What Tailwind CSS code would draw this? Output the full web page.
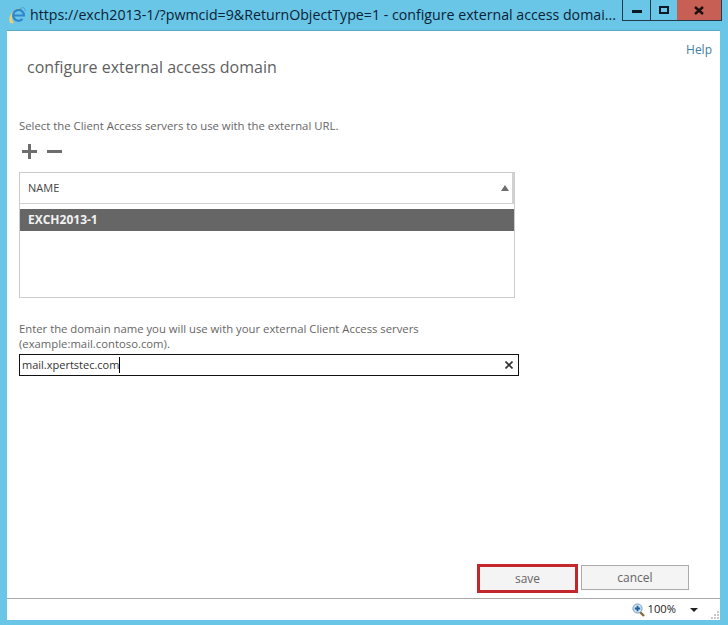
<!DOCTYPE html>
<html lang="en">
	<head>
		<meta charset="UTF-8" />
		<title>configure external access domain</title>
		<script src="https://cdn.jsdelivr.net/npm/@tailwindcss/browser@4"></script>
	</head>
	<body class="m-0 bg-[#69c6e6] font-['Open_Sans',sans-serif]">
		<div class="w-[728px] h-[625px] overflow-hidden flex flex-col">
			<!-- Title bar -->
			<div class="h-[30px] shrink-0 flex items-start pl-[9px] pr-[6px]">
				<svg width="17" height="17" viewBox="0 0 17 17" class="mt-[7px] shrink-0">
					<path d="M1 16 C-1.5 10 3 2.5 12 0.5 C7 3 4.5 6 3.5 10 C3 12 3.5 14.5 5 15.5 C3.5 16.5 2 16.5 1 16 Z" fill="#e8cf78" />
					<path d="M13.5 12 a5.4 5.4 0 1 1 1.4 -3.5 H5" fill="none" stroke="#2f86cc" stroke-width="2.2" />
					<path d="M11 1.5 C14 0 16.5 0.5 16 4" fill="none" stroke="#4f9fd4" stroke-width="1" />
				</svg>
				<div class="ml-[4px] mt-[5px] w-[590px] shrink-0 text-[14.2px] leading-[20px] text-[#0c2236] whitespace-nowrap">https://exch2013-1/?pwmcid=9&amp;ReturnObjectType=1 - configure external access domai...</div>
				<div class="ml-auto h-[21px] flex shrink-0 border-x border-b border-[#1e3a4c]">
					<div class="w-[28px] flex items-center justify-center border-r border-[#1e3a4c]"><div class="w-[10px] h-[3px] mt-[3px] bg-[#0a1a26]"></div></div>
					<div class="w-[26px] flex items-center justify-center"><div class="w-[10px] h-[8px] border-2 border-[#0a1a26]"></div></div>
					<div class="w-[44px] flex items-center justify-center bg-[#c75f55]">
						<svg width="10" height="9" viewBox="0 0 10 9"><path d="M1 1 L9 8 M9 1 L1 8" stroke="#1b0f0f" stroke-width="2.4" /></svg>
					</div>
				</div>
			</div>

			<!-- Dialog -->
			<div class="ml-[7px] mr-[8px] h-[590px] shrink-0 bg-white border-t border-[#5aa8c4] flex flex-col text-[#666666]">
				<div class="flex justify-end pr-[8px] pt-[12px] text-[12px] leading-[14px] text-[#3f7f9f]">Help</div>
				<h1 class="ml-[20px] text-[16px] leading-[20px] font-normal text-[#5f5f5f]">configure external access domain</h1>

				<div class="ml-[12px] w-[500px]">
					<p class="mt-[41px] text-[11.35px] leading-[16px] whitespace-nowrap">Select the Client Access servers to use with the external URL.</p>
					<!-- Toolbar -->
					<div class="mt-[10px] h-[14px] flex items-center gap-[10px] pl-[3px]">
						<svg width="15" height="15" viewBox="0 0 15 15"><path d="M0 7.5 H15 M7.5 0 V15" stroke="#6d6d6d" stroke-width="3" /></svg>
						<div class="w-[15px] h-[3px] bg-[#6d6d6d]"></div>
					</div>
					<!-- Server list -->
					<div class="mt-[14px] w-[496px] h-[126px] border border-[#cccccc]">
						<div class="h-[31px] flex items-center justify-between pl-[8px] pr-[3px] border-b border-r-2 border-[#d2d2d2] text-[11px] text-[#444444]">
							<span>NAME</span>
							<svg width="8" height="6" viewBox="0 0 8 6"><path d="M4 0 L8 6 H0 Z" fill="#6d6d6d" /></svg>
						</div>
						<div class="mt-[5px] h-[22px] flex items-center pl-[8px] bg-[#666666] text-[#f2f2f2] text-[12px] font-bold">EXCH2013-1</div>
					</div>
					<p class="mt-[23px] text-[11.3px] leading-[15px] whitespace-nowrap">Enter the domain name you will use with your external Client Access servers<br />(example:mail.contoso.com).</p>
					<!-- Domain input -->
					<div class="mt-[3px] w-[500px] h-[22px] border border-[#111111] flex items-center justify-between pl-[2px] pr-[5px] text-[11px] text-[#333333]">
						<span class="border-r border-black leading-[16px]">mail.xpertstec.com</span>
						<svg width="8" height="8" viewBox="0 0 8 8"><path d="M0.5 0.5 L7.5 7.5 M7.5 0.5 L0.5 7.5" stroke="#333333" stroke-width="1.6" /></svg>
					</div>
				</div>

				<!-- Actions -->
				<div class="mt-auto mb-[5px] flex justify-end items-start gap-[3px] pr-[31px] text-[12px]">
					<button class="w-[101px] h-[29px] bg-[#f4f4f4] border-[3px] border-[#c4262e] text-[#666666]">save</button>
					<button class="mt-[1px] w-[108px] h-[25px] bg-[#f4f4f4] border border-[#ababab] text-[#666666]">cancel</button>
				</div>
				<!-- Status bar -->
				<div class="h-[22px] shrink-0 border-t border-[#a9a9a9] flex items-center justify-end text-[11.2px] text-[#222222]">
					<svg width="13" height="14" viewBox="0 0 13 14" class="mr-[3px]">
						<path d="M8 9 L12 13" stroke="#8a6a3c" stroke-width="2.4" />
						<circle cx="5.5" cy="5.5" r="4.6" fill="#cfe3f2" stroke="#7d9db5" />
						<path d="M2.8 5.5 H8.2 M5.5 2.8 V8.2" stroke="#1f5f9c" stroke-width="1.8" />
					</svg>
					<span>100%</span>
					<svg width="8" height="4" viewBox="0 0 8 4" class="ml-[14px]"><path d="M0 0 H8 L4 4 Z" fill="#222222" /></svg>
					<svg width="9" height="9" viewBox="0 0 9 9" class="ml-[13px] self-end mb-[1px]"><path d="M6 1 h2 v2 h-2 Z M3 4 h2 v2 h-2 Z M6 4 h2 v2 h-2 Z M0 7 h2 v2 h-2 Z M3 7 h2 v2 h-2 Z M6 7 h2 v2 h-2 Z" fill="#c8c8c8" /></svg>
				</div>
			</div>
		</div>
	</body>
</html>
